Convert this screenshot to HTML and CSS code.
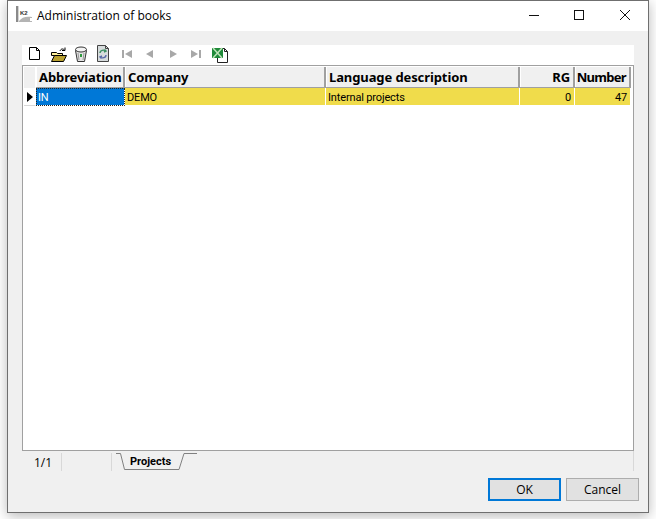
FILE: index.html
```html
<!DOCTYPE html>
<html lang="en">
<head>
<meta charset="utf-8">
<title>Administration of books</title>
<link rel="stylesheet" href="styles.css">
</head>
<body>
<div class="window">
  <header class="titlebar">
    <svg class="appicon" width="18" height="18" viewBox="0 0 18 18">
      <rect x="0" y="0" width="2" height="16" fill="#8a8a8a"/>
      <rect x="2" y="0" width="1" height="16" fill="#d4d4d4"/>
      <text x="4" y="9" class="k2">K2</text>
      <path d="M3 15c3-4 7-5 13-4v1h-2v3h2v1H3z" fill="#b4b4b4"/>
    </svg>
    <span class="title">Administration of books</span>
    <div class="winbtns">
      <svg width="10" height="10" viewBox="0 0 10 10"><path d="M0 5.500h10" stroke="#111" fill="none"/></svg>
      <svg width="10" height="10" viewBox="0 0 10 10"><rect x=".5" y=".5" width="9" height="9" stroke="#111" fill="none"/></svg>
      <svg class="close" width="10" height="10" viewBox="0 0 10 10"><path d="M0 0l10 10M10 0L0 10" stroke="#111" fill="none"/></svg>
    </div>
  </header>
  <main class="content">
    <div class="toolbar">
      <svg class="tool t-new" width="16" height="16" viewBox="0 0 16 16"><path d="M2.500 1.500h7l3 3v9h-10z" fill="#fff" stroke="#000"/><path d="M9.500 1.500v3h3" fill="none" stroke="#000"/></svg>
      <svg class="tool t-open" width="16" height="16" viewBox="0 0 16 16"><path d="M.5 5.500h5l1 1h5v2h-11z" fill="#ffef9a" stroke="#000"/><path d="M.5 14.500l3-6h12l-3 6z" fill="#b8a030" stroke="#000"/><path d="M9 4c1-2.500 3-2.500 4.500-1M14 .5v3h-3" fill="none" stroke="#000"/></svg>
      <svg class="tool t-bin" width="16" height="17" viewBox="0 0 16 17"><path d="M2.500 4.500l2 11h7l2-11z" fill="#e4e4e4" stroke="#333"/><ellipse cx="8" cy="3.500" rx="5.500" ry="2.500" fill="#f4f4f4" stroke="#333"/><path d="M5 7l1 7M11 7l-1 7" stroke="#999"/><rect x="7" y="8" width="2" height="3" fill="#2e9a3e"/></svg>
      <svg class="tool t-doc" width="16" height="18" viewBox="0 0 16 18"><path d="M2.500 .5h8l3 3v13h-11z" fill="#d6dbdc" stroke="#444"/><path d="M10.500 .5v3h3" fill="none" stroke="#444"/><path d="M5 8c0-3 4-3.500 6-2M9.500 4.500l1.500 1.500-2 1" fill="none" stroke="#3c8f63" stroke-width="1.400"/><path d="M11 10c0 3-4 3.500-6 2M6.500 13.500L5 12l2-1" fill="none" stroke="#5a6aa8" stroke-width="1.400"/></svg>
      <span class="navgroup">
        <svg width="12" height="16" viewBox="0 0 12 16"><path d="M1 4h2v8H1zM11 4v8L4 8z" fill="#a8a8a8"/></svg>
        <svg width="12" height="16" viewBox="0 0 12 16"><path d="M9 4v8L2 8z" fill="#a8a8a8"/></svg>
        <svg width="12" height="16" viewBox="0 0 12 16"><path d="M3 4v8l7-4z" fill="#a8a8a8"/></svg>
        <svg width="12" height="16" viewBox="0 0 12 16"><path d="M1 4v8l7-4zM9 4h2v8H9z" fill="#a8a8a8"/></svg>
      </span>
      <svg class="tool t-xls" width="17" height="18" viewBox="0 0 17 18"><path d="M5.500 2.500h7l3 3v11h-10z" fill="#fff" stroke="#222"/><path d="M12.500 2.500v3h3" fill="none" stroke="#222"/><path d="M0 2h11v10H0z" fill="#1f8a3a"/><path d="M1 2l9 10M10 2l-9 10" stroke="#bfe3b8" stroke-width="1.500"/></svg>
    </div>
    <div class="grid">
      <div class="row head">
        <div class="ind"></div>
        <div class="cell c1">Abbreviation</div>
        <div class="cell c2">Company</div>
        <div class="cell c3">Language description</div>
        <div class="cell c4 num">RG</div>
        <div class="cell c5 num">Number</div>
      </div>
      <div class="row data">
        <div class="ind"><span class="arrow"></span></div>
        <div class="cell c1 selected">IN</div>
        <div class="cell c2">DEMO</div>
        <div class="cell c3">Internal projects</div>
        <div class="cell c4 num">0</div>
        <div class="cell c5 num">47</div>
      </div>
    </div>
    <div class="tabbar">
      <span class="pager">1/1</span>
      <span class="spacer"></span>
      <div class="tab">
        <svg class="tabshape" width="82" height="18" viewBox="0 0 82 18"><path d="M0 .5h4.500l4 16h54.500l5-16H81" fill="none" stroke="#808080"/></svg>
        <span class="tablabel">Projects</span>
      </div>
    </div>
    <div class="actions">
      <button class="btn primary">OK</button>
      <button class="btn">Cancel</button>
    </div>
  </main>
</div>
</body>
</html>
```
FILE: styles.css
```css
* { box-sizing: border-box; }
html, body { margin: 0; height: 100%; background: #fff; overflow: hidden; }
body { padding-left: 7px; font-family: "Open Sans", "Noto Sans", sans-serif; }

.window {
  width: 642px;
  height: 513px;
  background: #f0f0f0;
  border: 1px solid #6f6f6f;
  display: flex;
  flex-direction: column;
  box-shadow: 0 3px 12px rgba(0,0,0,.28);
}

.titlebar {
  height: 30px;
  background: #fff;
  display: flex;
  align-items: center;
  padding-left: 8px;
  padding-bottom: 2px;
  flex: none;
}
.appicon { flex: none; }
.k2 { font: 700 6px "Liberation Sans", sans-serif; fill: #333; }
.title { margin-left: 3px; font-size: 12px; color: #000; }
.winbtns { margin-left: auto; display: flex; gap: 35px; padding-right: 18px; align-items: center; }
.winbtns .close { margin-left: 1px; }

.content { flex: 1; display: flex; flex-direction: column; padding: 14px 14px 0; min-height: 0; }

.toolbar {
  height: 20px;
  background: #fff;
  display: flex;
  align-items: center;
  padding-left: 5px;
  flex: none;
}
.tool { flex: none; }
.t-new { margin-top: -2px; }
.t-open { margin-left: 8px; margin-top: -1px; }
.t-bin { margin-left: 6px; margin-top: -1px; }
.t-doc { margin-left: 6px; margin-top: -2px; }
.t-xls { margin-left: 10px; margin-top: 0; }
.navgroup { display: flex; gap: 11px; margin-left: 10px; margin-top: -3px; }

.grid {
  height: 386px;
  background: #fff;
  border: 1px solid #a0a0a0;
  padding-top: 1px;
  padding-left: 1px;
  flex: none;
}

.row { display: flex; }
.head { height: 21px; font-weight: 700; font-size: 13px; font-family: "Noto Sans", sans-serif; letter-spacing: -.1px; color: #000; }
.data { height: 18px; font-size: 11px; font-family: "Roboto", sans-serif; color: #000; letter-spacing: -.15px; }

.ind { width: 12px; flex: none; background: #f0f0f0; border-right: 1px solid #fff; display: flex; align-items: center; justify-content: center; }
.data .ind { background: #fff; border-bottom: 1px solid #d8d8d8; padding-left: 1px; }
.arrow { width: 0; height: 0; border-left: 6px solid #000; border-top: 5px solid transparent; border-bottom: 5px solid transparent; }

.cell { flex: none; padding: 0 3px; display: flex; align-items: center; white-space: nowrap; overflow: hidden; }
.head .cell { background: #f0f0f0; border-right: 2px solid #a0a0a0; border-bottom: 1px solid #a0a0a0; box-shadow: inset 1px 0 0 #fff; }
.data .cell { background: #f0dc4b; border-right: 1px solid #fff; border-bottom: 1px solid #fff; padding: 2px 2px 0; }

.head .c1 { padding-left: 3px; }
.c1 { width: 89px; }
.c2 { width: 201px; }
.c3 { width: 194px; }
.c4 { width: 55px; }
.c5 { width: 56px; }
.num { justify-content: flex-end; }
.head .num { padding: 0 3px 0 0; }
.head .c5 { letter-spacing: -.7px; }
.data .num { padding-right: 3px; }

.data .cell.selected { background: #0078d7; color: #fff; outline: 1px dotted #222; outline-offset: -1px; }

.tabbar {
  height: 20px;
  display: flex;
  align-items: flex-start;
  flex: none;
  border-right: 1px solid #d8d8d8;
}
.pager { width: 40px; height: 18px; padding-left: 12px; font-size: 12px; line-height: 20px; margin-top: 2px; border-right: 1px solid #d8d8d8; }
.spacer { width: 50px; height: 18px; margin-top: 2px; border-right: 1px solid #d8d8d8; }
.tab { position: relative; width: 82px; height: 18px; margin-left: 4px; margin-top: 2px; }
.tabshape { display: block; }
.tablabel { position: absolute; left: 14px; top: 1px; font-size: 11px; font-weight: 700; line-height: 16px; font-family: "Roboto", sans-serif; }

.actions { display: flex; justify-content: flex-end; gap: 5px; padding-top: 7px; margin-right: -5px; }
.btn { width: 73px; height: 23px; background: #e1e1e1; border: 1px solid #adadad; font: 12px "Open Sans", sans-serif; color: #000; padding: 0; }
.btn.primary { border: 2px solid #0078d7; }
```
